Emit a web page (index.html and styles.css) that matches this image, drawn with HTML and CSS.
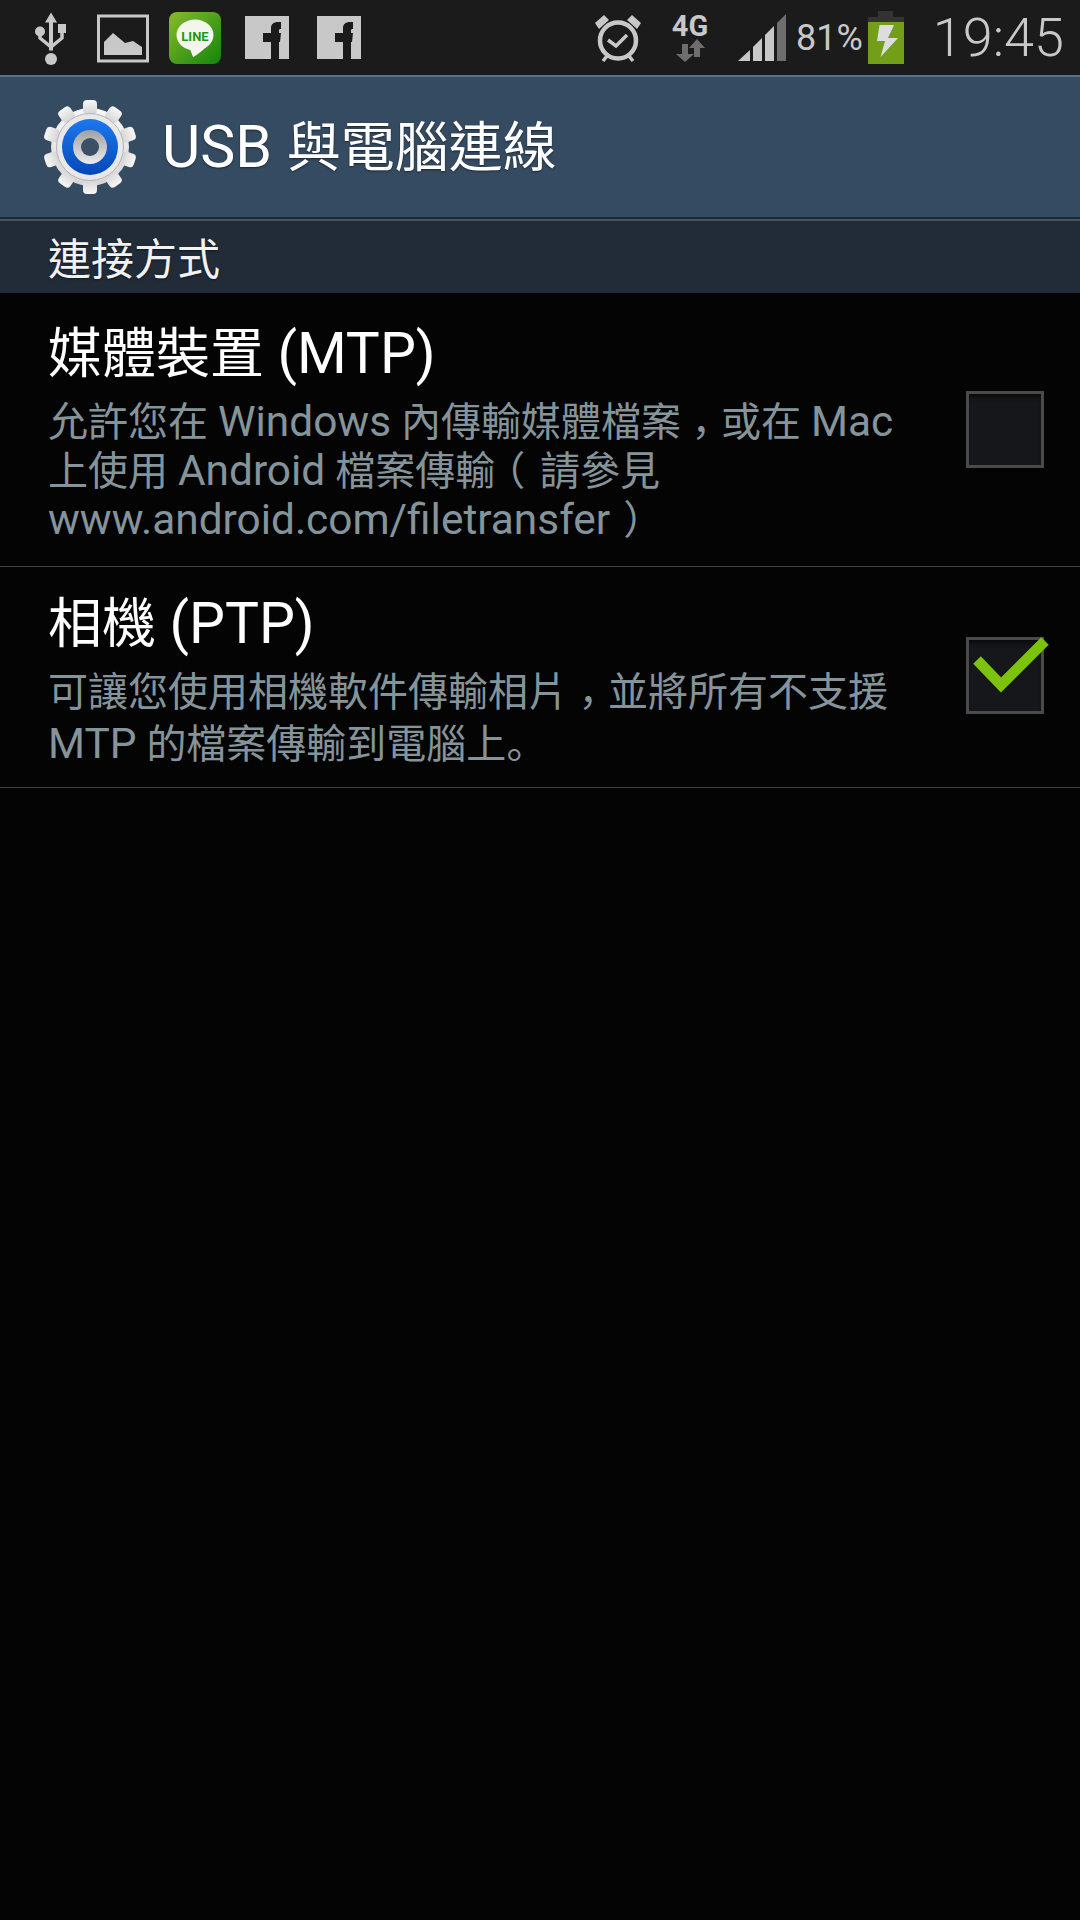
FILE: index.html
```html
<!DOCTYPE html>
<html lang="zh-Hant">
<head>
  <meta charset="UTF-8" />
  <title>USB 與電腦連線</title>
  <link rel="stylesheet" href="styles.css">
</head>
<body>
  <div class="status-bar">
    <div class="status-left">
      <svg class="ic-usb" width="36" height="54" viewBox="0 0 36 54">
        <path d="M18 1.5l6 10h-4v28h-4v-28h-4z" fill="#c8c8c8"/>
        <circle cx="18" cy="48" r="6" fill="#c8c8c8"/>
        <circle cx="7" cy="20.5" r="5" fill="#c8c8c8"/>
        <rect x="25" y="13" width="8" height="9" fill="#c8c8c8"/>
        <path d="M7 22v5l11 9 11-9v-7" fill="none" stroke="#c8c8c8" stroke-width="3.5"/>
      </svg>
      <svg class="ic-pic" width="54" height="50" viewBox="0 0 54 50">
        <rect x="2.5" y="3" width="49" height="45" fill="none" stroke="#c8c8c8" stroke-width="3"/>
        <path d="M8 42V29l9-9 12 10 8-2 9 6v8z" fill="#c8c8c8"/>
      </svg>
      <svg class="ic-line" width="52" height="52" viewBox="0 0 52 52">
        <defs>
          <linearGradient id="lineBg" x1="0" y1="0" x2="1" y2="1">
            <stop offset="0" stop-color="#8aba2e"/>
            <stop offset="1" stop-color="#12850a"/>
          </linearGradient>
        </defs>
        <rect width="52" height="52" rx="8" fill="url(#lineBg)"/>
        <ellipse cx="26" cy="23" rx="18.5" ry="15.5" fill="#f2f6ee"/>
        <path d="M21 37l3 8c4-2 9-6 13-10z" fill="#f2f6ee"/>
        <text x="26" y="28.5" class="line-label">LINE</text>
      </svg>
      <svg class="ic-fb" width="44" height="43" viewBox="0 0 44 43">
        <rect width="44" height="43" fill="#c8c8c8"/>
        <path d="M26 43V26h-8v-9h8v-5c0-4 3-6 7-6h3v7h-1c-1 0-1 1-1 2v2h2l-1 9h-1v17z" fill="#1b1b1b"/>
      </svg>
      <svg class="ic-fb" width="44" height="43" viewBox="0 0 44 43">
        <rect width="44" height="43" fill="#c8c8c8"/>
        <path d="M26 43V26h-8v-9h8v-5c0-4 3-6 7-6h3v7h-1c-1 0-1 1-1 2v2h2l-1 9h-1v17z" fill="#1b1b1b"/>
      </svg>
    </div>
    <div class="status-right">
      <svg class="ic-alarm" width="48" height="50" viewBox="0 0 48 50">
        <circle cx="24" cy="27.5" r="18" fill="none" stroke="#c8c8c8" stroke-width="4.5"/>
        <path d="M1 10l9-8 5 5-10 9zM47 10l-9-8-5 5 10 9z" fill="#c8c8c8"/>
        <path d="M14 27l8 6 11-11" fill="none" stroke="#c8c8c8" stroke-width="3.5"/>
        <path d="M9 48l4-5M39 48l-4-5" stroke="#c8c8c8" stroke-width="3.5"/>
      </svg>
      <div class="net">
        <span class="net-label">4G</span>
        <svg width="30" height="23" viewBox="0 0 30 23">
          <path d="M7 5h6v10h6l-9 8-9-8h6z" fill="#6e6e6e"/>
          <path d="M22 0l8 9h-5v9h-6V9h-5z" fill="#6e6e6e"/>
        </svg>
      </div>
      <svg class="ic-signal" width="48" height="48" viewBox="0 0 48 48">
        <path d="M0 47l12-11v11z" fill="#c8c8c8"/>
        <path d="M15 33l9-9v23h-9z" fill="#c8c8c8"/>
        <path d="M27 21l9-9v35h-9z" fill="#c8c8c8"/>
        <path d="M39 9l9-9v47h-9z" fill="#6e6e6e"/>
      </svg>
      <span class="battery-pct">81%</span>
      <svg class="ic-battery" width="36" height="53" viewBox="0 0 36 53">
        <path d="M10 0h15v6h11v10H0V6h10z" fill="#333"/>
        <rect y="11" width="36" height="42" fill="#729e19"/>
        <path d="M11.500 14H26l-6 13h10L12.500 46 17 30H9z" fill="#ddd"/>
      </svg>
      <span class="clock">19:45</span>
    </div>
  </div>

  <div class="action-bar">
    <svg class="ic-settings" width="96" height="96" viewBox="0 0 96 96">
      <defs>
        <linearGradient id="gearBg" x1="0" y1="0" x2="0" y2="1">
          <stop offset="0" stop-color="#f8f8f8"/>
          <stop offset="1" stop-color="#d4d4d4"/>
        </linearGradient>
        <linearGradient id="blueRing" x1="0" y1="0" x2="0" y2="1">
          <stop offset="0" stop-color="#1d78ee"/>
          <stop offset="1" stop-color="#0548b8"/>
        </linearGradient>
        <linearGradient id="midRing" x1="0" y1="0" x2="0" y2="1">
          <stop offset="0" stop-color="#a0a0a0"/>
          <stop offset="1" stop-color="#ececec"/>
        </linearGradient>
      </defs>
      <g fill="url(#gearBg)">
        <circle cx="48" cy="48" r="39"/>
        <rect x="41" y="1" width="14" height="14" rx="4"/>
        <rect x="41" y="1" width="14" height="14" rx="4" transform="rotate(36 48 48)"/>
        <rect x="41" y="1" width="14" height="14" rx="4" transform="rotate(72 48 48)"/>
        <rect x="41" y="1" width="14" height="14" rx="4" transform="rotate(108 48 48)"/>
        <rect x="41" y="1" width="14" height="14" rx="4" transform="rotate(144 48 48)"/>
        <rect x="41" y="1" width="14" height="14" rx="4" transform="rotate(180 48 48)"/>
        <rect x="41" y="1" width="14" height="14" rx="4" transform="rotate(216 48 48)"/>
        <rect x="41" y="1" width="14" height="14" rx="4" transform="rotate(252 48 48)"/>
        <rect x="41" y="1" width="14" height="14" rx="4" transform="rotate(288 48 48)"/>
        <rect x="41" y="1" width="14" height="14" rx="4" transform="rotate(324 48 48)"/>
      </g>
      <circle cx="48" cy="48" r="33.500" fill="#e8e8e8" stroke="#b5b5b5" stroke-width="1"/>
      <circle cx="48" cy="48" r="28" fill="url(#blueRing)"/>
      <circle cx="48" cy="48" r="17" fill="url(#midRing)"/>
      <circle cx="48" cy="48" r="9" fill="#3b5066"/>
    </svg>
    <h1 class="title"><span class="lat">USB </span>與電腦連線</h1>
  </div>

  <div class="section-head">連接方式</div>

  <div class="pref-row pref-row-mtp">
    <div class="pref-text">
      <div class="pref-title">媒體裝置 <span class="lat">(MTP)</span></div>
      <div class="pref-desc">允許您在 <span class="lat">Windows</span> 內傳輸媒體檔案<span class="comma">，</span>或在 <span class="lat">Mac</span><br>上使用 <span class="lat">Android</span> 檔案傳輸<span class="paren-open">（</span> 請參見<br><span class="lat">www.android.com/filetransfer</span><span class="paren-close"> ）</span></div>
    </div>
    <div class="checkbox"></div>
  </div>

  <div class="pref-row pref-row-ptp">
    <div class="pref-text">
      <div class="pref-title">相機 <span class="lat">(PTP)</span></div>
      <div class="pref-desc">可讓您使用相機軟件傳輸相片<span class="comma">，</span>並將所有不支援<br><span class="lat">MTP</span> 的檔案傳輸到電腦上<span class="stop" lang="ja">。</span></div>
    </div>
    <div class="checkbox">
      <svg class="check-mark" width="84" height="62" viewBox="0 0 84 62">
        <path d="M8 26l24 25L76 7" fill="none" stroke="#7cc20e" stroke-width="10.500"/>
      </svg>
    </div>
  </div>
</body>
</html>
```

FILE: styles.css
```css
body {
  margin: 0;
  background: #040404;
  font-family: "Roboto", "Noto Sans CJK TC", sans-serif;
  min-height: 1920px;
}
/* status bar */
.status-bar {
  height: 75px;
  background: #1b1b1b;
  display: flex;
  align-items: center;
  justify-content: space-between;
  box-sizing: border-box;
  padding: 0 16px 0 33px;
}
.status-left, .status-right {
  display: flex;
  align-items: center;
}
.ic-usb { margin-right: 27px; }
.ic-pic { margin-right: 19px; }
.ic-line { margin-right: 24px; }
.ic-fb { margin-right: 28px; }
.line-label {
  font: bold 13px "Roboto", sans-serif;
  fill: #1f9a12;
  text-anchor: middle;
}
.ic-alarm { margin-right: 29px; }
.net {
  display: flex;
  flex-direction: column;
  align-items: center;
  margin-right: 29px;
  width: 38px;
}
.net-label {
  color: #c8c8c8;
  font-size: 29px;
  font-weight: 700;
  line-height: 26px;
}
.ic-signal { margin-right: 10px; }
.battery-pct {
  color: #c8c8c8;
  font-size: 36px;
  margin-right: 5px;
}
.ic-battery { margin-right: 29px; }
.clock {
  color: #c8c8c8;
  font-size: 54px;
  font-weight: 300;
}
/* action bar */
.action-bar {
  height: 144px;
  background: #354b61;
  border-top: 2px solid #56728c;
  border-bottom: 2px solid #1c2733;
  box-sizing: border-box;
  display: flex;
  align-items: center;
  padding-left: 42px;
  gap: 24px;
}
.title {
  margin: 0 0 8px;
  color: #fff;
  font-size: 54px;
  font-weight: 400;
  text-shadow: 0 1px 2px rgba(0,0,0,0.5);
}
.title .lat { font-size: 59px; }
.section-head {
  height: 74px;
  box-sizing: border-box;
  background: #212c38;
  border-top: 2px solid #46525e;
  color: #f2f2f2;
  font-size: 43px;
  line-height: 78px;
  padding-left: 48px;
  text-shadow: 0 1px 2px rgba(0,0,0,0.5);
}
/* list rows */
.pref-row {
  display: flex;
  justify-content: space-between;
  box-sizing: border-box;
  border-bottom: 1px solid #3f4245;
  padding: 26px 36px 0 48px;
}
.pref-row-mtp { height: 274px; }
.pref-row-ptp { height: 221px; padding-top: 22px; }
.pref-title {
  color: #fff;
  font-size: 54px;
  line-height: 70px;
}
.pref-title .lat { font-size: 57px; }
.pref-desc {
  color: #85949b;
  font-size: 40px;
  line-height: 49px;
  margin-top: 8px;
}
.pref-desc .lat { font-size: 42.4px; line-height: 0; }
/* the device fonts set these marks differently from Noto */
.comma {
  line-height: 0;
  vertical-align: -0.28em;
}
.stop {
  font-family: "Noto Sans CJK JP", sans-serif;
}
.paren-open {
  font-feature-settings: "halt";
  margin: 0 5px 0 10px;
}
.paren-close { margin-left: 3px; }
.checkbox {
  position: relative;
  flex: none;
  width: 78px;
  height: 77px;
  box-sizing: border-box;
  border: 3px solid #4a4a4a;
  background: #15171b;
  box-shadow: inset 0 5px 4px -2px #0a0a0a;
  margin-top: 72px;
}
.pref-row-ptp .checkbox { margin-top: 48px; }
.check-mark {
  position: absolute;
  left: 0;
  top: -6px;
}
```
